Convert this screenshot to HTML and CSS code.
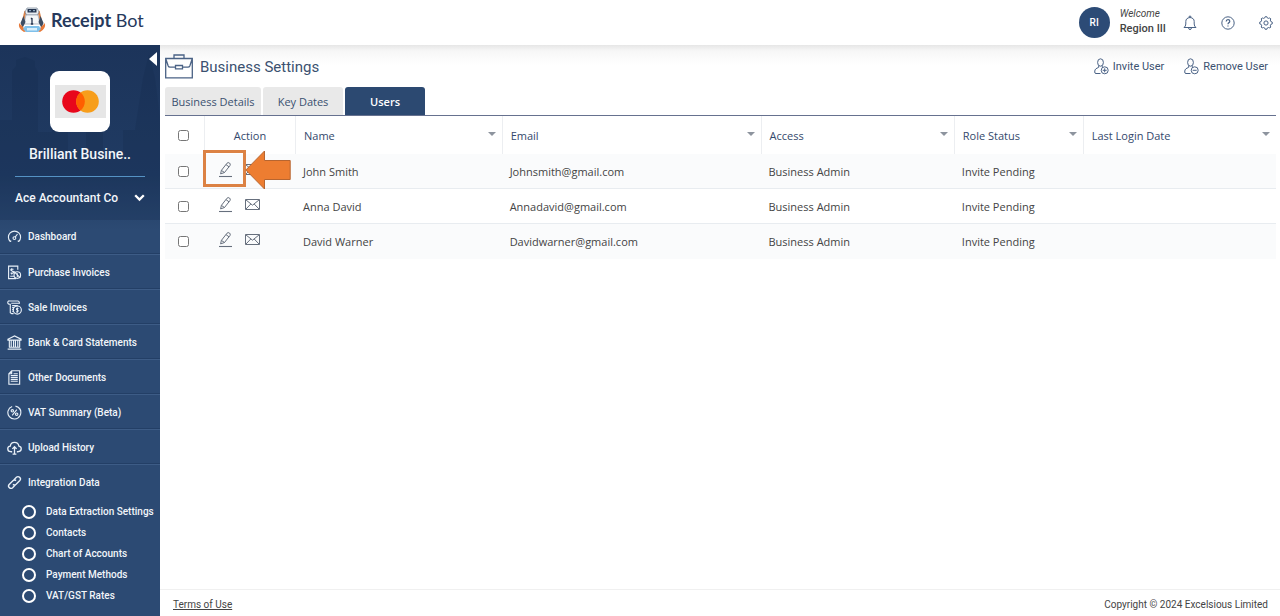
FILE: index.html
```html
<!DOCTYPE html>
<html lang="en">
<head>
<meta charset="utf-8">
<meta name="viewport" content="width=device-width, initial-scale=1">
<title>Receipt Bot - Business Settings</title>
<link rel="stylesheet" href="styles.css">
</head>
<body>
<svg class="defs" width="0" height="0" aria-hidden="true">
  <symbol id="pencil" viewBox="0 0 15 17"><path d="M1 15.5h13" stroke-width="1.1"/><path d="M2.6 12.9l.8-3.5L8.9 2.300q1.200-1.300 2.600-.300 1.300 1 .5 2.500L6.500 11.500zM8 3.600l3.100 2.300M3.400 9.400l3.100 2.100"/></symbol>
  <symbol id="mail" viewBox="0 0 15 11"><path d="M.5.5h14v10H.5zM.8.800l6.700 5.400L14.200.800M.8 10.200l5-5.200M14.200 10.200l-5-5.200"/></symbol>
  <symbol id="user" viewBox="0 0 15 17"><ellipse cx="6.500" cy="4.500" rx="2.900" ry="3.700"/><path d="M4.700 7.700v1.600L2 10.700Q.7 11.500.7 14q0 1.500 1.300 1.500h4.500M8.300 7.700v1.200"/><circle cx="10.700" cy="12.300" r="3.500"/></symbol>
</svg>
<header class="topbar">
  <a class="brand" href="#">
    <svg width="28" height="26" viewBox="0 0 28 26" aria-hidden="true">
      <path d="M7.500 4L5 14" stroke="#d9824a" stroke-width="2.200"/><path d="M20.500 4L23 14" stroke="#d9824a" stroke-width="2.200"/>
      <path d="M9 1h10l2 4-1.500 3h-11L7 5z" fill="#e9eef3" stroke="#5d6c80" stroke-width=".6"/>
      <path d="M9.500 2h9v3.500h-9z" fill="#24344f"/><path d="M11 3.700h2M15 3.700h2" stroke="#b9d4ea" stroke-width=".9"/>
      <path d="M8 8h12l2 9H6z" fill="#f4f6f8" stroke="#8a95a5" stroke-width=".6"/>
      <path d="M5.500 9L2.500 16l2 5 3-6zM22.500 9l3 7-2 5-3-6z" fill="#3d4d63"/>
      <path d="M1 16q-1 6 5 9l3-1-5-5zM27 16q1 6-5 9l-3-1 5-5z" fill="#e77a3a"/>
      <path d="M14 11v6M12.800 11.500H14M12.800 17h2.400" stroke="#24344f" stroke-width="1.300"/>
      <path d="M7 19h14l2 3-3 3H8l-3-3z" fill="#7fc0ea"/><path d="M9 21h10v2.500H9z" fill="#d8effc"/>
    </svg>
    <span><b>Receipt</b> Bot</span>
  </a>
  <div class="account">
    <span class="avatar">RI</span>
    <span class="who"><i>Welcome</i><strong>Region III</strong></span>
    <button class="icon-btn" type="button" aria-label="Notifications"><svg width="14" height="16" viewBox="0 0 14 16"><path d="M1 12.500q1.800-1.200 1.800-3.500V6.500Q2.800 3 7 2.500q4.200.5 4.200 4V9q0 2.300 1.800 3.500zM5.500 12.700q.2 1.900 1.500 1.900t1.500-1.900M6.200 2.500V1.200h1.600v1.300"/></svg></button>
    <button class="icon-btn" type="button" aria-label="Help"><svg width="14" height="14" viewBox="0 0 14 14"><circle cx="7" cy="7" r="6.200"/><path d="M5.200 5.600q0-1.900 1.800-1.900t1.800 1.600Q8.800 6.300 7.700 6.900 7 7.300 7 8.300M7 9.500v1.100" stroke-width="1.200"/></svg></button>
    <button class="icon-btn" type="button" aria-label="Settings"><svg width="14" height="14" viewBox="0 0 14 14"><circle cx="7" cy="7" r="2.100"/><path d="M5.800 1.800L6.200.7h1.600l.4 1.100 1.400.6 1.200-.5 1 1-.5 1.200.6 1.500 1.400.6v1.600l-1.400.5-.6 1.500.5 1.200-1 1-1.200-.5-1.400.6-.4 1.200H6.200l-.4-1.200-1.400-.6-1.200.5-1-1 .5-1.200-.6-1.500L.7 7.800V6.200l1.400-.6.6-1.500-.5-1.200 1-1 1.200.5z"/></svg></button>
  </div>
</header>
<div class="shell">
  <nav class="sidebar" aria-label="Main">
    <svg class="skyline" viewBox="0 0 160 175" preserveAspectRatio="none" aria-hidden="true"><path d="M0 175V75h12V26l4-5v-6l9-3 10 4v6l3 5v60h14v-12h16v30h18V80h17v28h20V85h12l8-52 6-24 6 24 5 40v102z"/></svg>
    <button class="collapse" type="button" aria-label="Collapse menu"></button>
    <div class="profile">
      <div class="logo-tile"><svg width="51" height="33" viewBox="0 0 51 33" aria-hidden="true"><path fill="#e6e6e6" d="M0 0h51v33H0z"/><circle cx="18.500" cy="16.500" r="11.300" fill="#e8071b"/><circle cx="32.500" cy="16.500" r="11.300" fill="#f79e1b"/><path d="M25.500 7.600a11.300 11.300 0 0 1 0 17.800 11.300 11.300 0 0 1 0-17.800z" fill="#ff5f00"/></svg></div>
      <div class="company">Brilliant Busine..</div>
      <button class="practice" type="button"><span>Ace Accountant Co</span><svg width="11" height="8" viewBox="0 0 11 8"><path d="M1.200 1.200l4.300 4.300 4.300-4.300" fill="none" stroke="#fff" stroke-width="2.300"/></svg></button>
    </div>
    <ul class="menu">
      <li><a href="#"><svg viewBox="0 0 16 16"><path d="M3.500 13.500A6.500 6.500 0 1 1 12.500 13.500M3.500 13.500l1-1M12.500 13.500l-1-1M8.700 8.600l2.500-3.300"/><circle cx="7.900" cy="9.700" r="1.500"/></svg>Dashboard</a></li>
      <li><a href="#"><svg viewBox="0 0 16 16"><path d="M11.500 5V1.200H1.700v13.300h8M5 3.500v2M7 4.500H4.500Q3.300 5.700 5.500 6.500 8 7.300 6.500 8.700H3.800M5 8.700v1.500M3.500 12h4"/><circle cx="11" cy="10.700" r="3.500"/><path d="M7 6.500l7 7M11 8.700v4"/></svg>Purchase Invoices</a></li>
      <li><a href="#"><svg viewBox="0 0 16 16"><path d="M3 4.500Q.8 4.500.8 2.700T2.500 1h9.300q1.500.3 1.500 2.500H4.500M3.500 4v9.500l1.500 1h2M5.500 6h6M5.500 8h2.500M5.500 10h1.500M5.500 12h1"/><circle cx="11" cy="10.700" r="4.300"/><path d="M12.200 9h-1.700q-1 .9.500 1.700t.3 1.900H9.800M11 8v5.500"/></svg>Sale Invoices</a></li>
      <li><a href="#"><svg viewBox="0 0 16 16"><path d="M1 4.500L8 1l7 3.500v1H1zM2 13h12M.7 15h14.600M2.500 6v7M4.500 6v7M7 6v7M9 6v7M11.500 6v7M13.500 6v7"/></svg>Bank &amp; Card Statements</a></li>
      <li><a href="#"><svg viewBox="0 0 16 16"><path d="M5 .8h8.500v14.400H2V4zM5 .8V4H2M7 4h4.500M4 6h7.500M4 8h7.500M4 10h7.500M4 12h7.500"/></svg>Other Documents</a></li>
      <li><a href="#"><svg viewBox="0 0 16 16"><path d="M5.500 1.500A6.900 6.900 0 1 0 9 1.200M11 1.900A6.900 6.900 0 0 1 14.900 7M10.500 5L5.500 11"/><circle cx="5.700" cy="6.200" r="1.300"/><circle cx="10.300" cy="9.800" r="1.300"/></svg>VAT Summary (Beta)</a></li>
      <li><a href="#"><svg viewBox="0 0 16 16"><path d="M5.500 12.500H4Q.8 12.300.8 9.300.8 6.800 3.500 6.500 4 2.500 8 2.500t4.700 4q2.500.4 2.500 2.900 0 2.900-3.200 3.100h-1.500M8 15V7.500M5.700 9.500L8 7.200l2.300 2.300M6 15h4" stroke-width="1.400"/></svg>Upload History</a></li>
      <li><a href="#"><svg viewBox="0 0 16 16"><path d="M7 5.500l3-3q1.700-1.500 3.500 0t.2 3.400l-4 4q-1.700 1.500-3.400.1M9 10.500l-3 3q-1.700 1.500-3.500 0t-.2-3.400l4-4q1.700-1.500 3.400-.1" stroke-width="1.500"/></svg>Integration Data</a>
        <ul class="submenu">
          <li><a href="#">Data Extraction Settings</a></li>
          <li><a href="#">Contacts</a></li>
          <li><a href="#">Chart of Accounts</a></li>
          <li><a href="#">Payment Methods</a></li>
          <li><a href="#">VAT/GST Rates</a></li>
        </ul>
      </li>
    </ul>
  </nav>
  <div class="page">
    <main class="content">
      <div class="heading">
        <svg width="28" height="25" viewBox="0 0 28 25" aria-hidden="true"><path d="M.7 4.500h26.600v19.300H.7zM9 4.500V1h10v3.500M.7 4.500l2.500 7.500q.5 1.200 1.800 1.200h5.500M27.300 4.500l-2.500 7.500q-.5 1.200-1.800 1.200h-5.500M10.500 11.500h7v3.300h-7z"/></svg>
        <h1>Business Settings</h1>
        <button class="user-btn" type="button"><svg width="15" height="17"><use href="#user"/><path d="M8.700 12.300h4M10.700 10.300v4"/></svg>Invite User</button>
        <button class="user-btn" type="button"><svg width="15" height="17"><use href="#user"/><path d="M8.700 12.300h4"/></svg>Remove User</button>
      </div>
      <div class="tabs" role="tablist">
        <button type="button" role="tab">Business Details</button>
        <button type="button" role="tab">Key Dates</button>
        <button class="active" type="button" role="tab" aria-selected="true">Users</button>
      </div>
      <table class="users">
        <colgroup><col class="c-check"><col class="c-action"><col class="c-name"><col class="c-email"><col class="c-access"><col class="c-role"><col></colgroup>
        <thead>
          <tr><th><input type="checkbox" aria-label="Select all"></th><th class="action">Action</th><th class="sort">Name</th><th class="sort">Email</th><th class="sort">Access</th><th class="sort">Role Status</th><th class="sort">Last Login Date</th></tr>
        </thead>
        <tbody>
          <tr><td><input type="checkbox" aria-label="Select John Smith"></td>
            <td><div class="actions"><button type="button" aria-label="Edit John Smith"><svg width="15" height="17"><use href="#pencil"/></svg></button><button type="button" aria-label="Email John Smith"><svg width="15" height="11"><use href="#mail"/></svg></button>
              <span class="callout"></span><svg class="pointer" width="46" height="40" viewBox="0 0 46 40" aria-hidden="true"><path d="M.8 20L19.500 1v9.500h25.700v19H19.500V39z"/></svg></div></td>
            <td>John Smith</td><td>Johnsmith@gmail.com</td><td>Business Admin</td><td>Invite Pending</td><td></td></tr>
          <tr><td><input type="checkbox" aria-label="Select Anna David"></td>
            <td><div class="actions"><button type="button" aria-label="Edit Anna David"><svg width="15" height="17"><use href="#pencil"/></svg></button><button type="button" aria-label="Email Anna David"><svg width="15" height="11"><use href="#mail"/></svg></button></div></td>
            <td>Anna David</td><td>Annadavid@gmail.com</td><td>Business Admin</td><td>Invite Pending</td><td></td></tr>
          <tr><td><input type="checkbox" aria-label="Select David Warner"></td>
            <td><div class="actions"><button type="button" aria-label="Edit David Warner"><svg width="15" height="17"><use href="#pencil"/></svg></button><button type="button" aria-label="Email David Warner"><svg width="15" height="11"><use href="#mail"/></svg></button></div></td>
            <td>David Warner</td><td>Davidwarner@gmail.com</td><td>Business Admin</td><td>Invite Pending</td><td></td></tr>
        </tbody>
      </table>
    </main>
    <footer class="footer"><a href="#">Terms of Use</a><span>Copyright © 2024 Excelsious Limited</span></footer>
  </div>
</div>
</body>
</html>
```
FILE: styles.css
```css
* { box-sizing: border-box; }
body {
  margin: 0;
  min-height: 100vh;
  display: flex;
  flex-direction: column;
  background: #fff;
  color: #444;
  font-family: Roboto, "Liberation Sans", sans-serif;
  font-size: 10px;
}
button {
  padding: 0;
  border: 0;
  background: none;
  color: inherit;
  font: inherit;
  cursor: pointer;
}
a { color: inherit; text-decoration: none; }
ul { margin: 0; padding: 0; list-style: none; }
svg { display: block; flex: none; }
.defs { position: absolute; }

.topbar {
  height: 45px;
  padding: 0 7px 0 18px;
  display: flex;
  align-items: center;
  justify-content: space-between;
}
.brand {
  display: flex;
  align-items: center;
  gap: 5px;
  padding-bottom: 5px;
  color: #26395c;
  font-family: Lato, sans-serif;
  font-size: 18px;
}
.account { display: flex; align-items: center; }
.avatar {
  width: 31px;
  height: 31px;
  margin-right: 10px;
  border-radius: 50%;
  background: #2c4b76;
  color: #fff;
  font-weight: 500;
  line-height: 31px;
  text-align: center;
}
.who {
  display: flex;
  flex-direction: column;
  margin-right: 17px;
  padding-bottom: 4px;
  font-size: 10px;
  line-height: 15px;
}
.who strong { font-size: 11px; font-weight: 500; }
.icon-btn svg, .user-btn svg, .heading > svg, .actions svg {
  fill: none;
  stroke: #4a6285;
}
.icon-btn + .icon-btn { margin-left: 24px; }

.shell { flex: 1; display: flex; }
.sidebar {
  position: relative;
  width: 160px;
  flex: none;
  background: linear-gradient(#1c345a, #203b63 130px, #2c4a73 185px);
  color: #f2f6fa;
  font-weight: 500;
}
.skyline {
  position: absolute;
  top: 0;
  left: 0;
  width: 100%;
  height: 175px;
  fill: #142a4c;
  opacity: 0.25;
}
.collapse {
  position: absolute;
  top: 7px;
  right: 3px;
  border: solid transparent;
  border-width: 7px 8px 7px 0;
  border-right-color: #fff;
}
.profile {
  position: relative;
  padding: 26px 15px 0;
  display: flex;
  flex-direction: column;
  align-items: center;
}
.logo-tile {
  width: 60px;
  height: 61px;
  border-radius: 9px;
  background: #fff;
  display: grid;
  place-items: center;
}
.company {
  align-self: stretch;
  padding: 12px 0;
  border-bottom: 1px solid #5592c4;
  font-size: 14px;
  line-height: 20px;
  text-align: center;
}
.practice {
  align-self: stretch;
  display: flex;
  justify-content: space-between;
  align-items: center;
  height: 42px;
  font-size: 12px;
}
.menu > li > a {
  display: flex;
  align-items: center;
  gap: 6px;
  height: 35px;
  padding-left: 7px;
}
.menu > li + li { border-top: 1px solid #3d5c86; }
.menu > li + li > a { height: 34px; }
.menu > li:not(:last-child) { box-shadow: inset 0 -1px #233f66; }
.menu svg {
  width: 15px;
  height: 15px;
  fill: none;
  stroke: #e8f0f8;
  stroke-width: 1.2;
}
.submenu { padding: 2px 0 10px; }
.submenu a {
  display: flex;
  align-items: center;
  gap: 10px;
  height: 21px;
  padding-left: 22px;
}
.submenu a::before {
  content: "";
  width: 10px;
  height: 10px;
  border: 2px solid #fff;
  border-radius: 50%;
}

.page {
  flex: 1;
  min-width: 0;
  display: flex;
  flex-direction: column;
  background: linear-gradient(#e6e6e6, #f7f7f7 6px, #fff 20px);
}
.content { flex: 1; padding: 9px 4px 0 5px; }
.heading {
  display: flex;
  align-items: center;
  height: 33px;
  padding: 0 8px 8px 0;
  color: #3b5170;
}
.heading > svg { stroke-width: 1.3; }
h1 { margin: 0 auto 0 7px; font-size: 15px; font-weight: 400; }
.user-btn {
  display: flex;
  align-items: center;
  gap: 4px;
  margin-left: 20px;
  font-size: 11px;
}
.tabs {
  display: flex;
  gap: 2px;
  border-bottom: 1px solid #66718f;
  font-family: "Open Sans", sans-serif;
  font-size: 11px;
  color: #3b5170;
}
.tabs button {
  width: 80px;
  height: 28px;
  border-radius: 3px 3px 0 0;
  background: #e9e9e9;
}
.tabs button:first-child { width: 96px; }
.tabs .active { background: #2c4971; color: #fff; font-weight: 600; }

.users {
  width: 100%;
  table-layout: fixed;
  border-collapse: separate;
  border-spacing: 0;
  font-family: "Open Sans", sans-serif;
  font-size: 11px;
}
.c-check { width: 39px; }
.c-action { width: 91px; }
.c-name { width: 18.6%; }
.c-email { width: 23.3%; }
.c-access { width: 17.4%; }
.c-role { width: 11.6%; }
.users th, .users td { height: 35px; padding: 0 8px; text-align: left; }
.users th { height: 38px; color: #34496c; font-weight: 400; }
.users th + th { border-left: 1px solid #eceef1; }
.users th.action { text-align: center; }
.users tr > :first-child { padding: 0 13px; }
.sort::after {
  content: "";
  float: right;
  margin: 4px -2px 0 0;
  border: solid transparent;
  border-width: 4px 4px 0;
  border-top-color: #8d949e;
}
.users td { border-bottom: 1px solid #e8ecf0; }
.users tbody tr:nth-child(odd) { background: #fafbfc; }
.users tbody tr:last-child td { border-bottom-color: #fafbfc; }
.users input { display: block; width: 11px; height: 11px; margin: 0; }
.actions {
  position: relative;
  display: flex;
  align-items: center;
  gap: 12px;
  padding: 0 0 3px 6px;
}
.actions svg { stroke: #666f7d; }
.callout {
  position: absolute;
  top: -11px;
  left: -9px;
  width: 43px;
  height: 37px;
  border: 3px solid #dc8244;
}
.pointer { position: absolute; top: -11px; left: 33px; }
.actions .pointer { fill: #ed7d31; stroke: #b76530; }

.footer {
  display: flex;
  justify-content: space-between;
  align-items: center;
  height: 27px;
  padding: 2px 12px 0 13px;
  border-top: 1px solid #f0f0f0;
}
.footer a { text-decoration: underline; }
```
